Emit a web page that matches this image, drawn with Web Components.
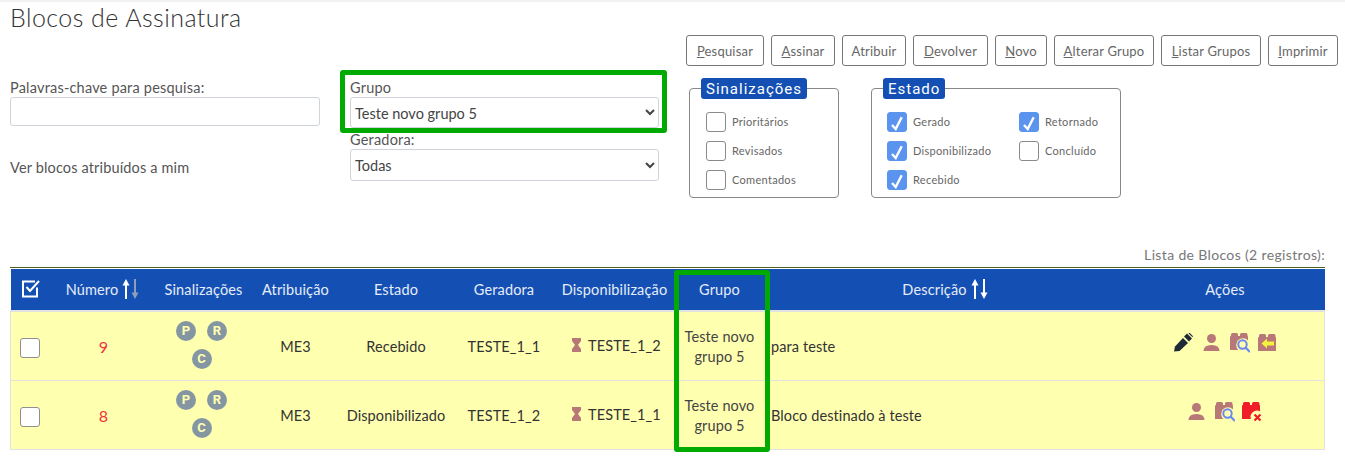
<!DOCTYPE html>
<html lang="pt-BR">
<head>
<meta charset="utf-8">
<title>Blocos de Assinatura</title>
<style>
  html, body { margin: 0; background: #fff; }
  body { font-family: Lato, "Liberation Sans", sans-serif; color: #444; overflow: hidden; }
</style>
</head>
<body>
<blocos-page>
  <span slot="title">Blocos de Assinatura</span>
  <tool-button slot="tools" key="P" rest="esquisar" width="78"></tool-button>
  <tool-button slot="tools" key="A" rest="ssinar" width="64"></tool-button>
  <tool-button slot="tools" rest="Atribuir" width="64"></tool-button>
  <tool-button slot="tools" key="D" rest="evolver" width="75"></tool-button>
  <tool-button slot="tools" key="N" rest="ovo" width="52"></tool-button>
  <tool-button slot="tools" key="A" rest="lterar Grupo" width="100"></tool-button>
  <tool-button slot="tools" key="L" rest="istar Grupos" width="100"></tool-button>
  <tool-button slot="tools" key="I" rest="mprimir" width="70"></tool-button>

  <filter-field slot="col1" label="Palavras-chave para pesquisa:" kind="input"></filter-field>
  <span slot="col1note">Ver blocos atribuídos a mim</span>
  <filter-field slot="col2" label="Grupo" kind="select" value="Teste novo grupo 5"></filter-field>
  <filter-field slot="col2" label="Geradora:" kind="select" value="Todas" tall></filter-field>

  <check-group slot="groups" legend="Sinalizações" width="150">
    <check-item label="Prioritários"></check-item>
    <check-item label="Revisados"></check-item>
    <check-item label="Comentados"></check-item>
  </check-group>
  <check-group slot="groups" legend="Estado" width="250" cols>
    <check-item label="Gerado" checked></check-item>
    <check-item label="Retornado" checked></check-item>
    <check-item label="Disponibilizado" checked></check-item>
    <check-item label="Concluído"></check-item>
    <check-item label="Recebido" checked></check-item>
  </check-group>

  <blocos-table caption="Lista de Blocos (2 registros):">
    <bloco-row numero="9" estado="Recebido" geradora="TESTE_1_1" disp="TESTE_1_2" descricao="para teste" acoes="pen,person,search,back"></bloco-row>
    <bloco-row numero="8" estado="Disponibilizado" geradora="TESTE_1_2" disp="TESTE_1_1" descricao="Bloco destinado à teste" acoes="person,search,remove"></bloco-row>
  </blocos-table>
</blocos-page>

<script>
const FONT = 'Lato, "Liberation Sans", sans-serif';
const COLS = '39px 105px 97px 87px 114px 102px 119px 91px 360px 200px';
const ROW_BG = '#ffffb0';

class BlocosPage extends HTMLElement {
  constructor() {
    super();
    this.attachShadow({ mode: 'open' });
  }
  connectedCallback() {
    this.shadowRoot.innerHTML = `
    <style>
      :host { display: block; position: relative; padding: 0 7px 0 10px; height: 467px; box-sizing: border-box;
              border-top: 2px solid #f2f2f2; font-family: ${FONT}; }
      .title { height: 33px; font-size: 25px; font-weight: 300; line-height: 31px; color: #333; letter-spacing: .45px; }
      .tools { display: flex; justify-content: flex-end; gap: 7px; height: 31px; }
      .filters { display: grid; grid-template-columns: 340px 339px auto; margin-top: 12px; height: 167px; }
      .col1, .col2 { padding-top: 1px; }
      .col1 { width: 310px; }
      .note { display: block; margin-top: 33px; font-size: 14.5px; line-height: 18px; color: #555; letter-spacing: .15px; }
      .groups { display: flex; gap: 32px; }
      .mark { position: absolute; box-sizing: border-box; border: 5px solid #00aa00; border-radius: 3px; pointer-events: none; }
      .mark.a { left: 340px; top: 68px; width: 327px; height: 63px; }
    </style>
    <div class="title"><slot name="title"></slot></div>
    <div class="tools"><slot name="tools"></slot></div>
    <div class="filters">
      <div class="col1"><slot name="col1"></slot><span class="note"><slot name="col1note"></slot></span></div>
      <div class="col2"><slot name="col2"></slot></div>
      <div class="groups"><slot name="groups"></slot></div>
    </div>
    <slot></slot>
    <div class="mark a"></div>`;
  }
}

class ToolButton extends HTMLElement {
  constructor() {
    super();
    this.attachShadow({ mode: 'open' });
  }
  connectedCallback() {
    const key = this.getAttribute('key') || '';
    this.shadowRoot.innerHTML = `
    <style>
      :host { display: block; }
      button { display: block; box-sizing: border-box; height: 31px; padding: 0; background: #fff; border: 1px solid #767676;
               border-radius: 3px; font: 13px ${FONT}; color: #666; letter-spacing: .2px; cursor: pointer; }
      u { text-decoration: underline; }
    </style>
    <button style="width:${this.getAttribute('width')}px"><u>${key}</u>${this.getAttribute('rest')}</button>`;
  }
}

class FilterField extends HTMLElement {
  constructor() {
    super();
    this.attachShadow({ mode: 'open' });
  }
  connectedCallback() {
    const input = this.getAttribute('kind') === 'input';
    const value = this.getAttribute('value');
    const tall = this.hasAttribute('tall');
    const control = input
      ? '<input type="text">'
      : `<select style="height:${tall ? 32 : 31}px"><option>${value}</option></select>`;
    this.shadowRoot.innerHTML = `
    <style>
      :host { display: block; width: ${input ? 310 : 309}px; }
      label { display: block; height: 18px; font-size: 14.5px; line-height: 17px; color: #555; letter-spacing: .2px; }
      input, select { display: block; box-sizing: border-box; width: 100%; background: #fff; border: 1px solid #ced4da;
                      border-radius: 3px; font: 14.5px ${FONT}; color: #444; }
      input { height: 29px; }
      select { padding: 1px 0 0; }
    </style>
    <label>${this.getAttribute('label')}</label>${control}`;
    if (!input) this.style.marginBottom = tall ? '0' : '3px';
  }
}

class CheckGroup extends HTMLElement {
  constructor() {
    super();
    this.attachShadow({ mode: 'open' });
  }
  connectedCallback() {
    const cols = this.hasAttribute('cols');
    this.shadowRoot.innerHTML = `
    <style>
      :host { display: block; width: ${this.getAttribute('width')}px; }
      fieldset { box-sizing: border-box; margin: 0; height: 120px; padding: 0 0 0 ${cols ? 15 : 16}px; border: 1px solid #888; border-radius: 4px; }
      legend { margin-left: -${cols ? 4 : 5}px; padding: 0 5px; height: 21px; background: #1450b4; border-radius: 3px; color: #fff;
               font: 15px/23px Roboto, sans-serif; letter-spacing: 1px; }
      .items { display: grid; grid-template-columns: ${cols ? '132px 1fr' : '1fr'}; grid-auto-rows: 29px; margin-top: 8px; }
    </style>
    <fieldset><legend>${this.getAttribute('legend')}</legend><div class="items"><slot></slot></div></fieldset>`;
  }
}

class CheckItem extends HTMLElement {
  constructor() {
    super();
    this.attachShadow({ mode: 'open' });
  }
  connectedCallback() {
    const on = this.hasAttribute('checked');
    this.shadowRoot.innerHTML = `
    <style>
      :host { display: flex; align-items: center; gap: 6px; font-size: 11px; color: #666; letter-spacing: .3px; }
      .box { box-sizing: border-box; width: 20px; height: 20px; border-radius: 3px; flex: none;
             border: 1px solid ${on ? '#5b94ee' : '#8a8a8a'}; background: ${on ? '#5b94ee' : '#fff'}; }
      svg { display: block; }
    </style>
    <span class="box">${on ? '<svg width="18" height="18" viewBox="0 0 18 18"><path d="M4 12 L7.7 16 L13.7 4.3" fill="none" stroke="#fff" stroke-width="2.4"/></svg>' : ''}</span>
    <span>${this.getAttribute('label')}</span>`;
  }
}

const SORT = (up, down) => `<svg width="17" height="20" viewBox="0 0 17 20" style="flex:none">
  <path d="M4 20V5" stroke="${up}" stroke-width="2"/><path d="M0.5 6.5 L4 0 L7.5 6.5Z" fill="${up}"/>
  <path d="M13 0V15" stroke="${down}" stroke-width="2"/><path d="M9.5 13.5 L13 20 L16.5 13.5Z" fill="${down}"/></svg>`;

class BlocosTable extends HTMLElement {
  constructor() {
    super();
    this.attachShadow({ mode: 'open' });
  }
  connectedCallback() {
    this.shadowRoot.innerHTML = `
    <style>
      :host { display: block; position: relative; width: 1315px; }
      .caption { height: 22px; text-align: right; font-size: 14px; line-height: 20px; color: #777; letter-spacing: .35px; }
      .head { display: grid; grid-template-columns: ${COLS}; height: 42px; padding-left: 1px;
              background: #1450b4; border-top: 1px solid #4f5f1e; box-shadow: inset 0 1px 0 #fff, inset 1px 0 0 #fff;
              border-bottom: 2px solid #e2e2e2; color: #e6ecf8; font-size: 14.5px; letter-spacing: .15px; }
      .head > div { display: flex; align-items: center; justify-content: center; gap: 4px; }
      .body { border-left: 1px solid #e2e2e2; border-right: 1px solid #e2e2e2; }
      .mark { position: absolute; left: 664px; top: 25px; width: 96px; height: 182px; box-sizing: border-box;
              border: 5px solid #00aa00; border-radius: 3px; pointer-events: none; }
    </style>
    <div class="caption">${this.getAttribute('caption')}</div>
    <div class="head">
      <div><svg width="20" height="20" viewBox="0 0 20 20"><path d="M16 8.5V17.5H2V2.5H14" fill="none" stroke="#fff" stroke-width="2"/><path d="M5.5 8 L9 12 L18 2" fill="none" stroke="#fff" stroke-width="2"/></svg></div>
      <div>Número ${SORT('#fff', '#8f9db8')}</div>
      <div>Sinalizações</div>
      <div>Atribuição</div>
      <div>Estado</div>
      <div>Geradora</div>
      <div>Disponibilização</div>
      <div>Grupo</div>
      <div>Descrição ${SORT('#fff', '#fff')}</div>
      <div>Ações</div>
    </div>
    <div class="body"><slot></slot></div>
    <div class="mark"></div>`;
  }
}

const ROSE = '#b87878';
const BLOCK = c => `<path d="M0 17V4Q0 3 1 3H1V1.5Q1 0 2.5 0H6.5Q8 0 8 1.5V3H10V1.5Q10 0 11.5 0H16Q17.5 0 17.5 1.5V3Q18 3 18 4V17Z" fill="${c}"/>`;
const ICONS = {
  pen: `<svg width="19" height="19" viewBox="0 0 19 19"><path d="M0 18.5 L1 13.5 L9 5 L14 10 L5.5 18Z" fill="#1f2a37"/><path d="M10 3.5 L13 0.5 L18 5.5 L15 8.5Z" fill="#1f2a37"/><path d="M15 0 L18.7 3.7" stroke="#1f2a37" stroke-width="1.2"/></svg>`,
  person: `<svg width="17" height="17" viewBox="0 0 17 17"><circle cx="8.5" cy="4.5" r="4.5" fill="${ROSE}"/><path d="M0.5 17Q0.5 11 8.5 11Q16.5 11 16.5 17Z" fill="${ROSE}"/></svg>`,
  search: `<svg class="s" width="20" height="20" viewBox="0 0 20 20">${BLOCK(ROSE)}<circle cx="13" cy="12" r="6.8" fill="${ROW_BG}"/><circle cx="12.5" cy="11.5" r="4.2" fill="none" stroke="#6a88f0" stroke-width="2"/><path d="M15.5 14.5 L20 19" stroke="#6a88f0" stroke-width="2.2"/></svg>`,
  back: `<svg width="18" height="18" viewBox="0 0 18 18">${BLOCK(ROSE)}<path d="M3.5 9.5 L9 4.5V7.5H16V11.5H9V14.5Z" fill="#f4f03c"/></svg>`,
  remove: `<svg width="20" height="20" viewBox="0 0 20 20">${BLOCK('#f01c28')}<circle cx="15" cy="15" r="6.5" fill="${ROW_BG}"/><path d="M12.5 12.5 L18.5 18.5M18.5 12.5 L12.5 18.5" stroke="#f01c28" stroke-width="2.2"/></svg>`
};

class BlocoRow extends HTMLElement {
  constructor() {
    super();
    this.attachShadow({ mode: 'open' });
  }
  connectedCallback() {
    const a = n => this.getAttribute(n);
    const icons = a('acoes').split(',').map(n => ICONS[n]).join('');
    this.shadowRoot.innerHTML = `
    <style>
      :host { display: grid; grid-template-columns: ${COLS}; height: 68px; background: ${ROW_BG}; border-bottom: 1px solid #e2e2e2;
              font-size: 14.5px; color: #333; letter-spacing: .1px; }
      .c { display: flex; align-items: center; justify-content: center; text-align: center; }
      .chk { width: 20px; height: 20px; box-sizing: border-box; background: #fff; border: 1px solid #8f8f8f; border-radius: 3px; margin: 4px 2px 0 0; }
      .num { color: #f0323c; font-size: 16px; padding-left: 2px; }
      .flags { display: flex; flex-wrap: wrap; justify-content: center; gap: 8px 11px; width: 60px; margin: -3px 4px 0 0; }
      .flag { display: flex; align-items: center; justify-content: center; width: 20px; height: 20px; border-radius: 50%;
              background: #8596a3; color: ${ROW_BG}; font: bold 13px "Liberation Sans Narrow", Roboto, sans-serif; }
      .disp { gap: 7px; margin-top: -2px; padding-left: 4px; }
      .grupo { line-height: 20px; color: #444; padding: 0 8px; margin-top: 2px; }
      .desc { justify-content: flex-start; padding-left: 6px; text-align: left; }
      .acts { gap: 10px; margin-top: -7px; }
      svg { display: block; flex: none; }
      .s { margin-right: -2.5px; }
    </style>
    <div class="c"><span class="chk"></span></div>
    <div class="c num">${a('numero')}</div>
    <div class="c"><div class="flags"><span class="flag">P</span><span class="flag">R</span><span class="flag">C</span></div></div>
    <div class="c">ME3</div>
    <div class="c">${a('estado')}</div>
    <div class="c">${a('geradora')}</div>
    <div class="c disp"><svg width="9" height="14" viewBox="0 0 9 14"><path d="M0 0H9V3L6 7L9 11V14H0V11L3 7L0 3Z" fill="${ROSE}"/></svg>${a('disp')}</div>
    <div class="c grupo">Teste novo grupo 5</div>
    <div class="c desc">${a('descricao')}</div>
    <div class="c acts">${icons}</div>`;
  }
}

customElements.define('blocos-page', BlocosPage);
customElements.define('tool-button', ToolButton);
customElements.define('filter-field', FilterField);
customElements.define('check-group', CheckGroup);
customElements.define('check-item', CheckItem);
customElements.define('blocos-table', BlocosTable);
customElements.define('bloco-row', BlocoRow);
</script>
</body>
</html>
